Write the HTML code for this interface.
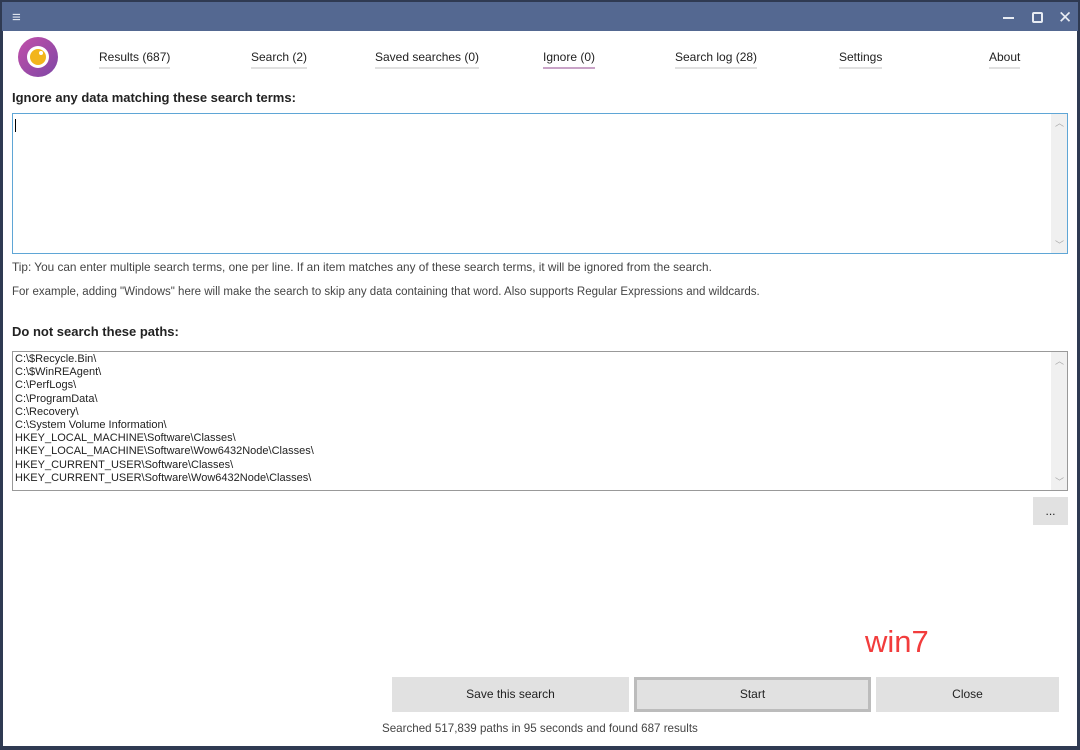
<!DOCTYPE html>
<html><head><meta charset="utf-8"><style>
*{margin:0;padding:0;box-sizing:border-box}
body{width:1080px;height:750px;background:#2f3a52;font-family:"Liberation Sans",sans-serif;font-size:12px;color:#222;position:relative;overflow:hidden}
.tb{position:absolute;left:2px;top:2px;right:2px;height:29px;background:#546891}
.win{position:absolute;left:3px;top:31px;width:1074px;height:715px;background:#fff}
.a{position:absolute;white-space:nowrap}
.tab{position:absolute;top:50px;font-size:12px;color:#222;padding-bottom:3px;border-bottom:2px solid #e0e0e0}
.box{position:absolute;border:1px solid #999;background:#fff}
.sb{position:absolute;right:0;top:0;bottom:0;width:16px;background:#f0f0f0}
.btn{position:absolute;top:677px;height:35px;background:#e1e1e1;text-align:center;line-height:35px;font-size:12px;color:#222}
</style></head><body>
<div class="tb">
<div class="a" style="left:10px;top:7px;color:#dfe4ee;font-size:15px">≡</div>
<div class="a" style="left:1001px;top:15px;width:11px;height:2px;background:#e8ecf3"></div>
<div class="a" style="left:1030px;top:10px;width:11px;height:11px;border:2px solid #e8ecf3;border-radius:2px"></div>
<div class="a" style="left:1056px;top:6px;color:#e8ecf3;font-size:17px">✕</div>
</div>
<div class="win"></div>
<div class="a" style="left:18px;top:37px;width:40px;height:40px;border-radius:50%;background:linear-gradient(135deg,#c24fa8,#7e47a6)"></div>
<div class="a" style="left:27px;top:46px;width:22px;height:22px;border-radius:50%;background:#fff"></div>
<div class="a" style="left:30px;top:49px;width:16px;height:16px;border-radius:50%;background:#f2b51c"></div>
<div class="a" style="left:39px;top:51px;width:4px;height:4px;border-radius:50%;background:#fff"></div>
<div class="tab" style="left:99px">Results (687)</div>
<div class="tab" style="left:251px">Search (2)</div>
<div class="tab" style="left:375px">Saved searches (0)</div>
<div class="tab" style="left:543px;border-bottom-color:#c9a3c7">Ignore (0)</div>
<div class="tab" style="left:675px">Search log (28)</div>
<div class="tab" style="left:839px">Settings</div>
<div class="tab" style="left:989px">About</div>
<div class="a" style="left:12px;top:90px;font-weight:bold;font-size:13px">Ignore any data matching these search terms:</div>
<div class="box" style="left:12px;top:113px;width:1056px;height:141px;border-color:#5fa6d6"><div class="sb"><div class="a" style="left:4px;top:2px;color:#aaa;font-size:9px">︿</div><div class="a" style="left:4px;bottom:2px;color:#aaa;font-size:9px">﹀</div></div>
<div class="a" style="left:2px;top:5px;width:1px;height:13px;background:#000"></div></div>
<div class="a" style="left:12px;top:260px;font-size:11.8px;color:#444">Tip: You can enter multiple search terms, one per line. If an item matches any of these search terms, it will be ignored from the search.</div>
<div class="a" style="left:12px;top:286px;font-size:11.5px;color:#444">For example, adding "Windows" here will make the search to skip any data containing that word. Also supports Regular Expressions and wildcards.</div>
<div class="a" style="left:12px;top:324px;font-weight:bold;font-size:13px">Do not search these paths:</div>
<div class="box" style="left:12px;top:351px;width:1056px;height:140px"><div class="sb"><div class="a" style="left:4px;top:2px;color:#aaa;font-size:9px">︿</div><div class="a" style="left:4px;bottom:2px;color:#aaa;font-size:9px">﹀</div></div>
<div class="a" style="left:2px;top:1px;font-size:11px;line-height:13.2px;color:#222">C:\$Recycle.Bin\<br>C:\$WinREAgent\<br>C:\PerfLogs\<br>C:\ProgramData\<br>C:\Recovery\<br>C:\System Volume Information\<br>HKEY_LOCAL_MACHINE\Software\Classes\<br>HKEY_LOCAL_MACHINE\Software\Wow6432Node\Classes\<br>HKEY_CURRENT_USER\Software\Classes\<br>HKEY_CURRENT_USER\Software\Wow6432Node\Classes\</div></div>
<div class="a" style="left:1033px;top:497px;width:35px;height:28px;background:#e1e1e1;text-align:center;line-height:28px">...</div>
<div class="a" style="left:865px;top:624px;color:#f23c3c;font-size:31px">win7</div>
<div class="btn" style="left:392px;width:237px">Save this search</div>
<div class="btn" style="left:634px;width:237px;border:3px solid #bcbcbc;line-height:29px">Start</div>
<div class="btn" style="left:876px;width:183px">Close</div>
<div class="a" style="left:382px;top:722px;font-size:11.6px;color:#444">Searched 517,839 paths in 95 seconds and found 687 results</div>
</body></html>
